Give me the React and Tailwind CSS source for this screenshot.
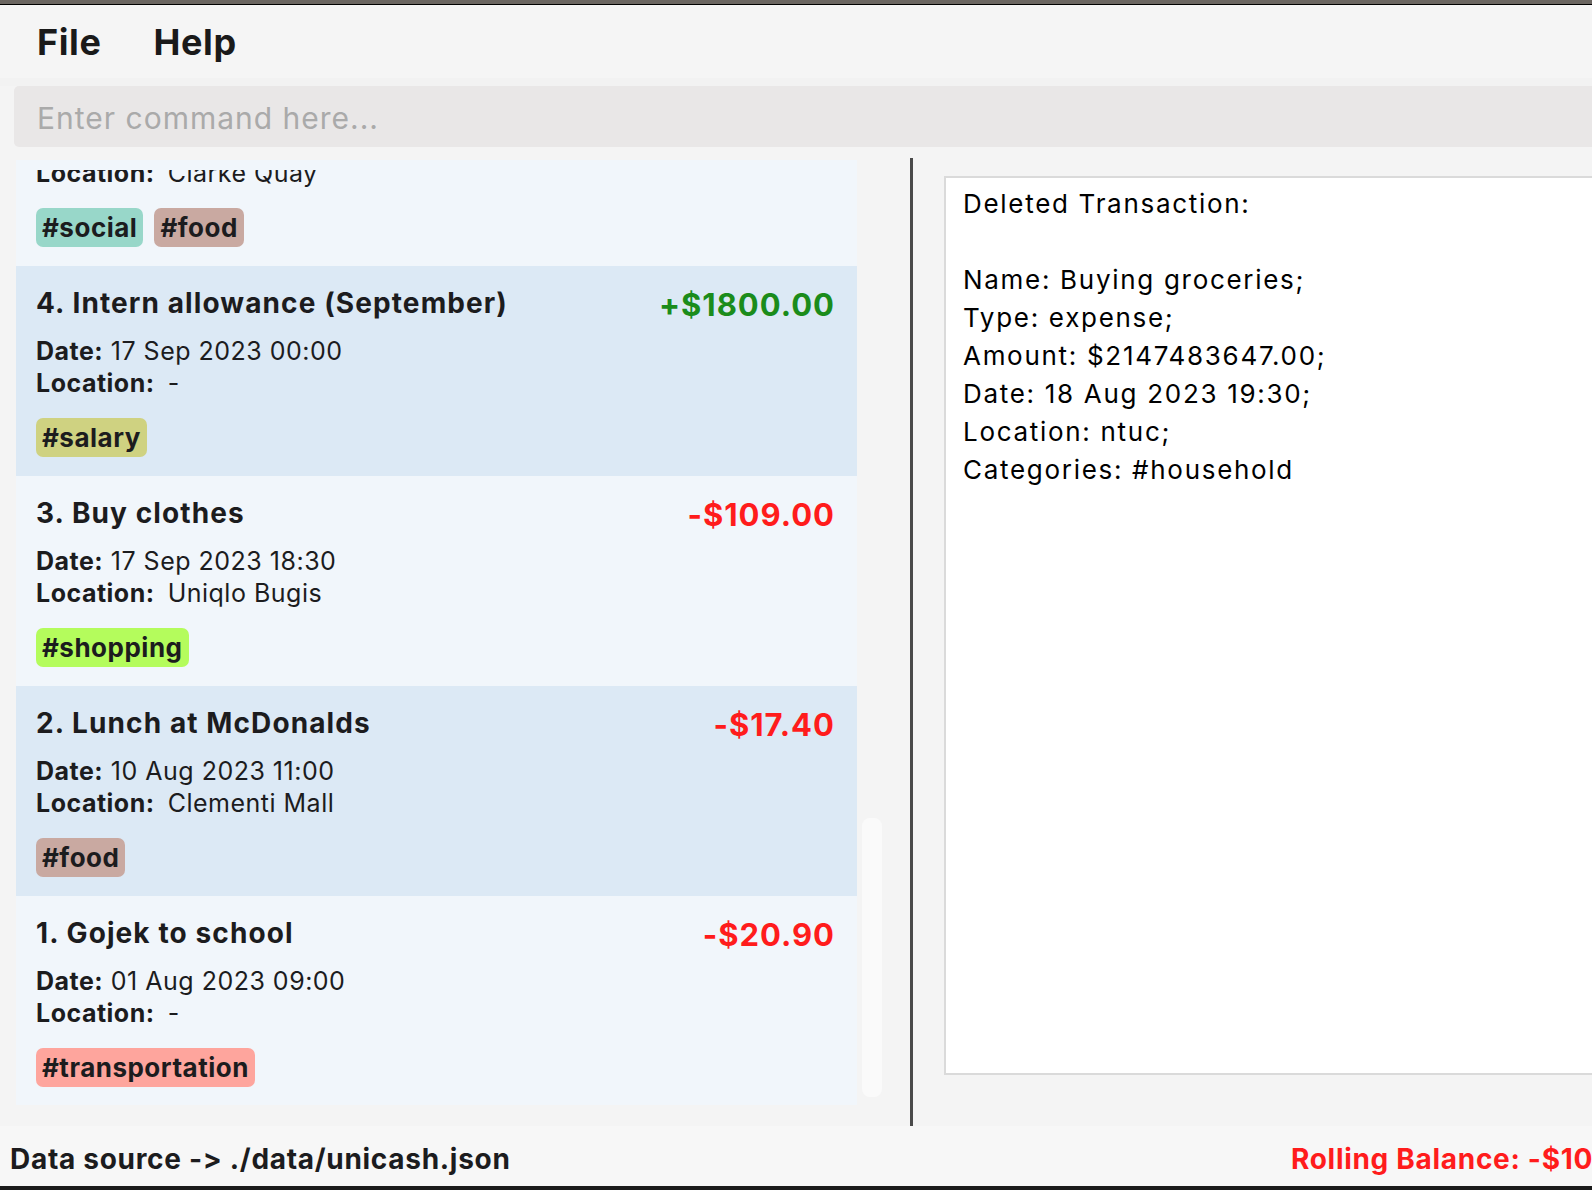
import React from "react";

const cards = [
  {
    n: 4,
    title: "Intern allowance (September)",
    amount: "+$1800.00",
    pos: true,
    date: "17 Sep 2023 00:00",
    loc: "-",
    tags: [["#salary", "bg-[#cfd281]"]],
    bg: "bg-[#dce9f5]",
  },
  {
    n: 3,
    title: "Buy clothes",
    amount: "-$109.00",
    pos: false,
    date: "17 Sep 2023 18:30",
    loc: "Uniqlo Bugis",
    tags: [["#shopping", "bg-[#b4fc5c]"]],
    bg: "bg-[#f1f6fb]",
  },
  {
    n: 2,
    title: "Lunch at McDonalds",
    amount: "-$17.40",
    pos: false,
    date: "10 Aug 2023 11:00",
    loc: "Clementi Mall",
    tags: [["#food", "bg-[#c9a9a1]"]],
    bg: "bg-[#dce9f5]",
  },
  {
    n: 1,
    title: "Gojek to school",
    amount: "-$20.90",
    pos: false,
    date: "01 Aug 2023 09:00",
    loc: "-",
    tags: [["#transportation", "bg-[#fea59d]"]],
    bg: "bg-[#f1f6fb]",
  },
];

function Tags({ tags }) {
  return (
    <div className="flex gap-[11px]">
      {tags.map(([t, b]) => (
        <div
          key={t}
          className={`${b} h-[39px] rounded-[7px] px-[6px] text-[26px] font-bold leading-[39px] tracking-[0.5px]`}
        >
          {t}
        </div>
      ))}
    </div>
  );
}

function Card({ c }) {
  return (
    <div className={`${c.bg} h-[210px] shrink-0 pt-[20px] pl-[20px] pr-[22px] text-[#1c1c1e]`}>
      <div className="flex h-[34px] items-center justify-between">
        <div className="text-[28px] font-bold leading-[34px] tracking-[1.1px]">
          {c.n}. {c.title}
        </div>
        <div
          className={`pt-[3px] text-[31px] font-bold leading-[34px] tracking-[1px] ${
            c.pos ? "text-[#1b8c1b]" : "text-[#ff1c1c]"
          }`}
        >
          {c.amount}
        </div>
      </div>
      <div className="mt-[15px] text-[25px] leading-[32px] tracking-[0.5px]">
        <div>
          <span className="font-bold">Date:</span> {c.date}
        </div>
        <div>
          <span className="font-bold">Location:</span>
          <span className="ml-[13px]">{c.loc}</span>
        </div>
      </div>
      <div className="mt-[19px]">
        <Tags tags={c.tags} />
      </div>
    </div>
  );
}

export default function App() {
  return (
    <div className="flex h-[1190px] w-[1592px] flex-col overflow-hidden bg-[#f4f4f4] font-[Inter,sans-serif] [font-feature-settings:'calt'_0]">
      <div className="h-[4px] shrink-0 bg-[#6b6661]" />
      <div className="h-[1px] shrink-0 bg-black" />
      <div className="flex h-[73px] shrink-0 items-center gap-[52px] bg-[#f5f5f5] pl-[37px] text-[36px] font-bold tracking-[0.6px] text-[#1a1a1a]">
        <span>File</span>
        <span>Help</span>
      </div>
      <div className="h-[8px] shrink-0 bg-[#f2f2f2]" />
      <div className="ml-[14px] flex h-[61px] w-[1700px] shrink-0 items-center rounded-l-[5px] bg-[#e9e7e7] pl-[23px] pt-[4px] text-[30px] tracking-[1px] text-[#aaaaaa]">
        Enter command here...
      </div>
      <div className="h-[11px] shrink-0" />
      <div className="flex h-[968px] shrink-0">
        <div className="flex w-[910px] shrink-0 pl-[16px] pt-[2px]">
          <div className="flex h-[945px] w-[841px] flex-col overflow-hidden">
            <div className="h-[10px] shrink-0 bg-[#f1f6fb]" />
            <div className="h-[96px] shrink-0 overflow-hidden bg-[#f1f6fb] pl-[20px] text-[#1c1c1e]">
              <div className="-mt-[13px] text-[25px] leading-[32px] tracking-[0.5px]">
                <span className="font-bold">Location:</span>
                <span className="ml-[13px]">Clarke Quay</span>
              </div>
              <div className="mt-[19px]">
                <Tags
                  tags={[
                    ["#social", "bg-[#98d7c9]"],
                    ["#food", "bg-[#c9a9a1]"],
                  ]}
                />
              </div>
            </div>
            {cards.map((c) => (
              <Card key={c.n} c={c} />
            ))}
          </div>
          <div className="ml-[5px] flex h-[945px] w-[20px] flex-col justify-end pb-[8px]">
            <div className="h-[279px] w-[20px] rounded-[8px] bg-[#fafafa]" />
          </div>
        </div>
        <div className="w-[3px] shrink-0 bg-[#4a4a4a]" />
        <div className="flex-1 pl-[31px] pt-[18px]">
          <div className="h-[899px] w-[800px] border-2 border-[#dadada] bg-white pl-[17px] pt-[7px] text-[26px] leading-[38px] tracking-[1.7px] text-black">
            <div>Deleted Transaction:</div>
            <div className="h-[38px]" />
            <div>Name: Buying groceries;</div>
            <div>Type: expense;</div>
            <div>Amount: $2147483647.00;</div>
            <div>Date: 18 Aug 2023 19:30;</div>
            <div>Location: ntuc;</div>
            <div>Categories: #household</div>
          </div>
        </div>
      </div>
      <div className="flex h-[60px] shrink-0 items-center bg-[#f7f7f7] pt-[6px] text-[28px] font-bold tracking-[0.7px]">
        <div className="w-[1291px] shrink-0 pl-[10px] text-[#1c1c1e]">
          Data source -&gt; ./data/unicash.json
        </div>
        <div className="shrink-0 whitespace-nowrap text-[#ff1c1c]">
          Rolling Balance: -$10
        </div>
      </div>
      <div className="h-[4px] shrink-0 bg-[#1b1b1b]" />
    </div>
  );
}
